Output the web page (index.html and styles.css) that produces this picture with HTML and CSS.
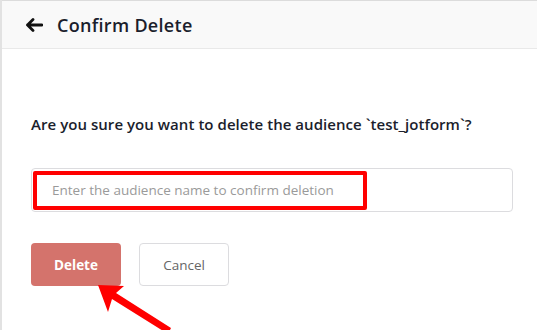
FILE: index.html
```html
<!DOCTYPE html>
<html lang="en">
<head>
  <meta charset="UTF-8" />
  <meta name="viewport" content="width=device-width, initial-scale=1" />
  <title>Confirm Delete</title>
  <link rel="stylesheet" href="styles.css">
</head>
<body>

  <div class="page">
    <header class="topbar">
      <button class="back" type="button" aria-label="Back">
        <svg width="18" height="14" viewBox="0 0 18 14">
          <path d="M17 7H2.5M8 1.5L2.5 7L8 12.5" fill="none" stroke="#111" stroke-width="2.8" stroke-linecap="round" stroke-linejoin="round"/>
        </svg>
      </button>
      <h1 class="title">Confirm Delete</h1>
    </header>

    <main class="content">
      <p class="question">Are you sure you want to delete the audience `test_jotform`?</p>

      <div class="field">
        <input type="text" class="confirm-input" placeholder="Enter the audience name to confirm deletion" />
        <span class="highlight"></span>
      </div>

      <div class="actions">
        <button type="button" class="btn btn-delete">Delete</button>
        <button type="button" class="btn btn-cancel">Cancel</button>
      </div>
    </main>

    <!-- annotation arrow pointing at the delete button -->
    <svg class="pointer" width="90" height="60" viewBox="0 0 90 60">
      <path d="M0 0L26 1L18 8L73 43L70 49L14 14L10 27Z" fill="#ff0000"/>
    </svg>
  </div>

</body>
</html>
```

FILE: styles.css
```css
body {
  margin: 0;
  font-family: "Open Sans", "Liberation Sans", sans-serif;
  background: #fff;
}
.page {
  position: relative;
  height: 330px;
  overflow: hidden;
  border-left: 2px solid #e2e2e2;
}
.topbar {
  display: flex;
  align-items: center;
  height: 47px;
  padding-left: 23px;
  background-color: #f9f9f9;
  border-top: 1px solid #dcdcdc;
  border-bottom: 1px solid #e9e9e9;
}
.back {
  display: flex;
  padding: 0;
  border: none;
  background: none;
  cursor: pointer;
}
.title {
  margin: 0 0 0 14px;
  font-size: 18px;
  font-weight: 600;
  color: #1b1e2c;
  letter-spacing: 0.3px;
}
.content {
  padding: 0 24px 0 29px;
}
.question {
  margin: 65px 0 0;
  font-size: 15px;
  font-weight: 600;
  color: #1b1e2c;
  letter-spacing: 0.05px;
}
.field {
  position: relative;
  margin-top: 34px;
}
.confirm-input {
  display: block;
  width: 100%;
  height: 44px;
  padding: 0 20px;
  box-sizing: border-box;
  border: 1px solid #dcdcdf;
  border-radius: 4px;
  font-family: inherit;
  font-size: 13.5px;
  color: #333;
}
.confirm-input::placeholder {
  color: #9a9a9a;
}
.highlight {
  position: absolute;
  left: 2px;
  top: 3px;
  width: 334px;
  height: 39px;
  box-sizing: border-box;
  border: 4px solid #ff0000;
  border-radius: 2px;
  pointer-events: none;
}
.actions {
  display: flex;
  gap: 18px;
  margin-top: 31px;
}
.btn {
  width: 90px;
  height: 43px;
  border-radius: 4px;
  font-family: inherit;
  font-size: 13.5px;
  cursor: pointer;
}
.btn-delete {
  background-color: #d4736c;
  border: none;
  color: #fff;
  font-weight: 700;
}
.btn-cancel {
  background: #fff;
  border: 1px solid #dcdcdf;
  color: #666;
  font-weight: 500;
}
.pointer {
  position: absolute;
  left: 96px;
  top: 285px;
}
```
